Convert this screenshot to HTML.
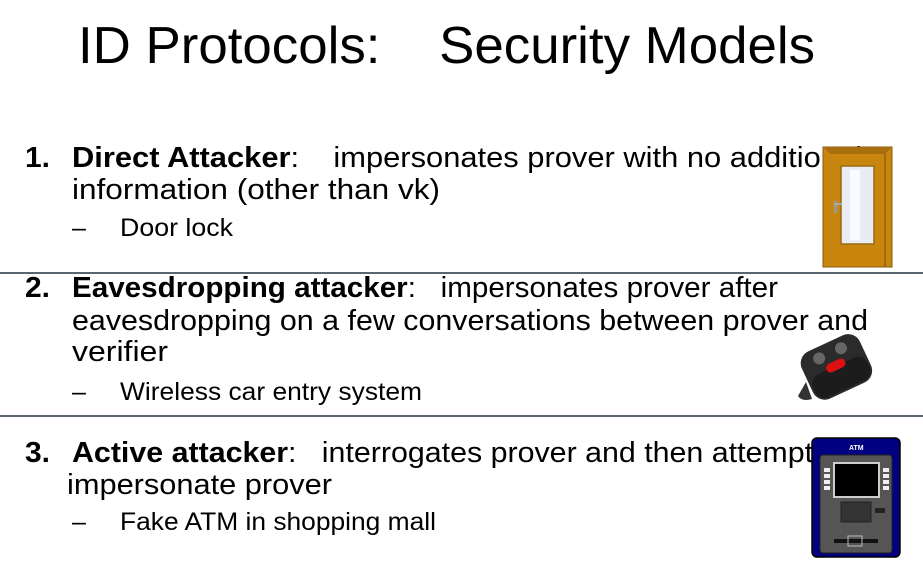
<!DOCTYPE html>
<html><head><meta charset="utf-8"><style>
html,body{margin:0;padding:0;background:#fff;}
svg{display:block;}
text{font-family:"Liberation Sans",sans-serif;fill:#000;}
</style></head><body>
<svg width="923" height="569" viewBox="0 0 923 569" xmlns="http://www.w3.org/2000/svg">
<rect width="923" height="569" fill="#fff"/>
<text x="78" y="63" font-size="52" textLength="737" lengthAdjust="spacingAndGlyphs" xml:space="preserve">ID Protocols:    Security Models</text>

<text x="25" y="167" font-size="29" font-weight="bold" textLength="25" lengthAdjust="spacingAndGlyphs">1.</text>
<text x="72" y="167" font-size="29" textLength="790" lengthAdjust="spacingAndGlyphs" xml:space="preserve"><tspan font-weight="bold">Direct Attacker</tspan>:    impersonates prover with no additional</text>
<text x="72" y="199" font-size="29" textLength="368" lengthAdjust="spacingAndGlyphs">information (other than vk)</text>
<text x="72" y="236" font-size="25">–</text>
<text x="120" y="236" font-size="25" textLength="113" lengthAdjust="spacingAndGlyphs">Door lock</text>

<rect x="0" y="272" width="923" height="2" fill="#5a6570"/>

<text x="25" y="297" font-size="29" font-weight="bold" textLength="25" lengthAdjust="spacingAndGlyphs">2.</text>
<text x="72" y="297" font-size="29" textLength="706" lengthAdjust="spacingAndGlyphs" xml:space="preserve"><tspan font-weight="bold">Eavesdropping attacker</tspan>:   impersonates prover after</text>
<text x="72" y="330" font-size="29" textLength="796" lengthAdjust="spacingAndGlyphs">eavesdropping on a few conversations between prover and</text>
<text x="72" y="361" font-size="29" textLength="96" lengthAdjust="spacingAndGlyphs">verifier</text>
<text x="72" y="400" font-size="25">–</text>
<text x="120" y="400" font-size="25" textLength="302" lengthAdjust="spacingAndGlyphs">Wireless car entry system</text>

<rect x="0" y="415" width="923" height="2" fill="#5a6570"/>

<text x="25" y="462" font-size="29" font-weight="bold" textLength="25" lengthAdjust="spacingAndGlyphs">3.</text>
<text x="72" y="462" font-size="29" textLength="790" lengthAdjust="spacingAndGlyphs" xml:space="preserve"><tspan font-weight="bold">Active attacker</tspan>:   interrogates prover and then attempts to</text>
<text x="67" y="494" font-size="29" textLength="265" lengthAdjust="spacingAndGlyphs">impersonate prover</text>
<text x="72" y="530" font-size="25">–</text>
<text x="120" y="530" font-size="25" textLength="316" lengthAdjust="spacingAndGlyphs">Fake ATM in shopping mall</text>

<!-- door -->
<rect x="823" y="147" width="69" height="120" fill="#c8860f"/>
<rect x="823" y="147" width="69" height="120" fill="none" stroke="#8a5a10" stroke-width="1"/>
<polygon points="823,147 892,147 885,154 830,154" fill="#a86e10"/>
<rect x="841" y="166" width="33" height="78" fill="#eaecf4" stroke="#9a6a10" stroke-width="1.5"/>
<rect x="850" y="170" width="10" height="70" fill="#fafbff"/>
<rect x="834" y="201" width="3" height="12" fill="#999"/>
<rect x="834" y="203" width="8" height="2" fill="#aaa"/>
<line x1="885" y1="154" x2="885" y2="267" stroke="#7a4e0c" stroke-width="1"/>

<!-- fob -->
<rect x="795" y="332" width="80" height="74" fill="#fff"/>
<path d="M806 382 l-8 14 q4 6 14 3 z" fill="#333"/>
<g transform="rotate(-25 836 366)">
<rect x="804" y="341" width="64" height="52" rx="13" fill="#2b2b2b"/>
<rect x="806" y="366" width="60" height="25" rx="10" fill="#1c1c1c"/>
<circle cx="824" cy="352" r="6" fill="#666"/>
<circle cx="848" cy="352" r="6" fill="#666"/>
<rect x="826" y="361" width="20" height="9" rx="4" fill="#d11"/>
</g>

<!-- ATM -->
<rect x="812" y="438" width="88" height="119" rx="5" fill="#000080" stroke="#000" stroke-width="1.5"/>
<text x="849" y="450" font-size="7" font-weight="bold" style="fill:#fff">ATM</text>
<rect x="820" y="455" width="72" height="98" rx="3" fill="#555" stroke="#222" stroke-width="1"/>
<rect x="834" y="463" width="45" height="34" fill="#000" stroke="#ccc" stroke-width="2"/>
<g fill="#eee"><rect x="824" y="468" width="6" height="4"/><rect x="824" y="474" width="6" height="4"/><rect x="824" y="480" width="6" height="4"/><rect x="824" y="486" width="6" height="4"/>
<rect x="883" y="468" width="6" height="4"/><rect x="883" y="474" width="6" height="4"/><rect x="883" y="480" width="6" height="4"/><rect x="883" y="486" width="6" height="4"/></g>
<rect x="841" y="502" width="30" height="20" fill="#333" stroke="#222"/>
<rect x="875" y="508" width="10" height="5" fill="#222"/>
<rect x="834" y="539" width="44" height="4" fill="#111"/>
<rect x="848" y="536" width="14" height="10" fill="none" stroke="#bbb"/>
</svg>
</body></html>
